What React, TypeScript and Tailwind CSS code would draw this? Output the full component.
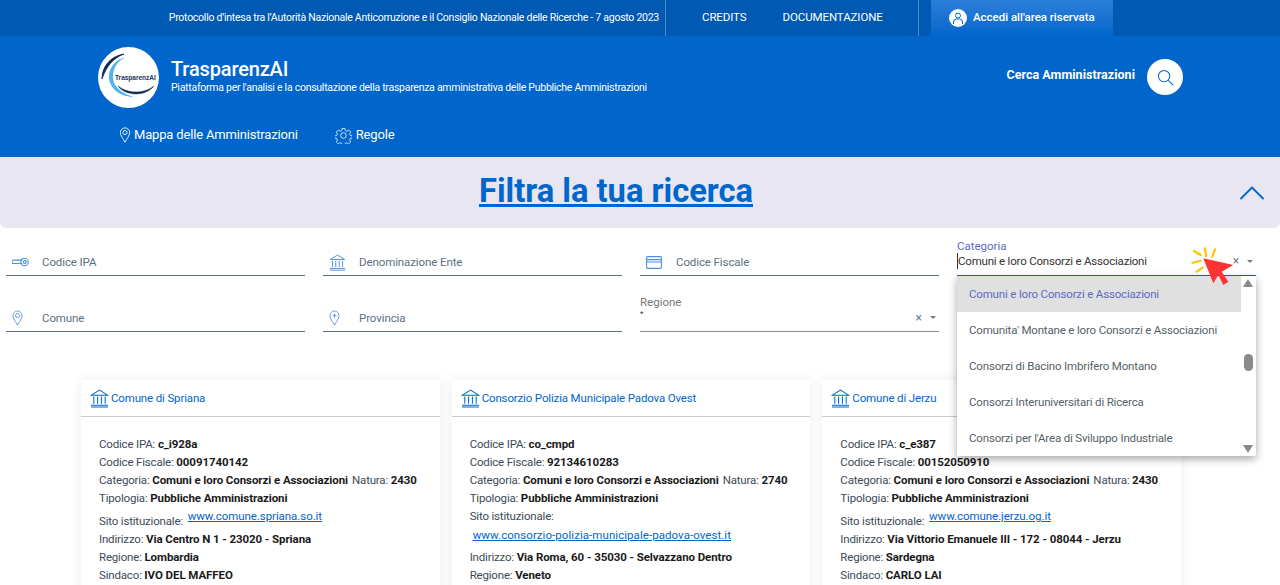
import React from 'react';
import { ChevronUp } from 'lucide-react';

const font = 'font-["Roboto",sans-serif]';

const Pin = ({ className = '', plus = false }: { className?: string; plus?: boolean }) => (
  <svg viewBox="0 0 14 20" fill="none" stroke="currentColor" strokeWidth="1.1" className={className}>
    <path d="M7 19 C5 15 1.2 11 1.2 6.9 a5.8 5.8 0 0 1 11.6 0 C12.8 11 9 15 7 19 Z" />
    {plus ? <path d="M7 4.5 v5 M4.5 7 h5" /> : <circle cx="7" cy="6.9" r="2.6" />}
  </svg>
);

const Bank = ({ className = '' }: { className?: string }) => (
  <svg viewBox="0 0 20 20" fill="none" stroke="currentColor" strokeWidth="1.1" className={className}>
    <path d="M1.5 6.5 L10 1.2 L18.5 6.5 Z" />
    <path d="M4 8 V15.5 M8 8 V15.5 M12 8 V15.5 M16 8 V15.5" />
    <path d="M1 17 H19 M1 19 H19" />
  </svg>
);

const Key = ({ className = '' }: { className?: string }) => (
  <svg viewBox="0 0 18 10" fill="none" stroke="currentColor" strokeWidth="1.2" className={className}>
    <path d="M11 3 H1.5 a1 1 0 0 0 0 3.6 H11" />
    <circle cx="13.2" cy="5" r="4" />
    <circle cx="13.6" cy="5" r="1.5" />
  </svg>
);

const CardIcon = ({ className = '' }: { className?: string }) => (
  <svg viewBox="0 0 16 13" fill="none" stroke="currentColor" strokeWidth="1.1" className={className}>
    <rect x="0.6" y="0.6" width="14.8" height="11.8" rx="1.2" />
    <path d="M0.6 3.6 H15.4 M0.6 6 H15.4" />
  </svg>
);

const Gear = ({ className = '' }: { className?: string }) => (
  <svg viewBox="0 0 24 24" fill="none" stroke="currentColor" strokeWidth="1.1" className={className}>
    <circle cx="12" cy="12" r="4" />
    <path d="M10 2 h4 l.6 3 2.2 1 2.6-1.6 2.8 2.8-1.6 2.6 1 2.2 3 .6 v3 l-3 .6-1 2.2 1.6 2.6-2.8 2.8-2.6-1.6-2.2 1-.6 3 h-4 l-.6-3-2.2-1-2.6 1.6-2.8-2.8 1.6-2.6-1-2.2-3-.6 v-3 l3-.6 1-2.2-1.6-2.6 2.8-2.8 2.6 1.6 2.2-1 z" />
  </svg>
);

const Search = ({ className = '' }: { className?: string }) => (
  <svg viewBox="0 0 18 18" fill="none" stroke="currentColor" strokeWidth="1.1" className={className}>
    <circle cx="7.5" cy="7.5" r="6" />
    <path d="M12 12 L17 17" />
  </svg>
);

const Logo = () => (
  <div className="relative w-[61px] h-[61px] rounded-full bg-white shrink-0">
    <svg viewBox="0 0 61 61" fill="none" className="absolute inset-0">
      <path d="M26 7 C13 9 4 19 4 32 C8 20 15 11 26 7 Z" fill="#0f2a52" stroke="#0f2a52" strokeWidth="0.8" />
      <path d="M28 10.5 C18 12 11 20 11 30 C11 41 22 50 36 50 C26 47 15 41 15 30 C15 21 20 13 28 10.5 Z" fill="#4fb4f0" />
      <path d="M20 39 C26 48 46 51 56 39 C46 47 30 47 20 39 Z" fill="#0f2a52" stroke="#0f2a52" strokeWidth="0.5" />
    </svg>
    <span className="absolute left-[17px] top-[27px] text-[6.5px] leading-[8px] font-bold text-[#17325c] font-['Liberation_Sans',sans-serif]">
      TrasparenzAI
    </span>
  </div>
);

const Field = ({ icon, label }: { icon: React.ReactNode; label: string }) => (
  <div className="h-[48px] flex items-center border-b border-[#5c6f82] text-[#5c6f82] pt-[24px] pb-[3px]">
    <span className="w-[36px] pl-[6px] text-[#4a90e2] flex items-center">{icon}</span>
    <span className="text-[11.5px] leading-[16px] tracking-[-0.1px]">{label}</span>
  </div>
);

const SelectArrows = () => (
  <span className="flex items-center gap-[8px] text-[#6b7c8c]">
    <span className="text-[12px] leading-none">×</span>
    <span className="w-0 h-0 border-x-[3.5px] border-x-transparent border-t-[3.5px] border-t-current" />
  </span>
);

const options = [
  'Comuni e loro Consorzi e Associazioni',
  "Comunita' Montane e loro Consorzi e Associazioni",
  'Consorzi di Bacino Imbrifero Montano',
  'Consorzi Interuniversitari di Ricerca',
  "Consorzi per l'Area di Sviluppo Industriale",
];

const Dropdown = () => (
  <div className="absolute left-0 right-0 top-[48px] h-[180px] bg-white shadow-[0_3px_8px_rgba(0,0,0,0.35)] flex z-10">
    <div className="flex-1">
      {options.map((o, i) => (
        <div
          key={o}
          className={`h-[36px] leading-[36px] pl-[12px] text-[11.5px] tracking-[-0.17px] ${i === 0 ? 'bg-[#e0e0e0] text-[#5c6bc0]' : 'text-[#555f69]'}`}
        >
          {o}
        </div>
      ))}
    </div>
    <div className="w-[15px] relative bg-white">
      <span className="absolute left-[2px] top-[3px] w-0 h-0 border-x-[5px] border-x-transparent border-b-[8px] border-b-[#8a8a8a]" />
      <span className="absolute left-[3px] top-[78px] w-[9px] h-[17px] rounded-full bg-[#8a8a8a]" />
      <span className="absolute left-[2px] bottom-[3px] w-0 h-0 border-x-[5px] border-x-transparent border-t-[8px] border-t-[#8a8a8a]" />
    </div>
  </div>
);

const Cursor = () => (
  <svg viewBox="0 0 44 44" className="absolute left-[234px] top-[16px] w-[44px] h-[44px] z-20">
    <path d="M12.3 14.3 L42.3 21 L30.7 27.7 L37.3 37.7 L32.3 41 L27.3 31 L22.3 39.3 Z" fill="#ff3333" />
    <path d="M3 7 L9.7 11 M14 4.3 L15 12 M24 5.3 L21.3 12.7 M1.7 18.7 L9.7 16.7 M5.7 27.7 L11.7 23.7" stroke="#ffc400" strokeWidth="2.2" strokeLinecap="round" />
  </svg>
);

const Label = ({ k, v }: { k: string; v: string }) => (
  <>
    {k}: <b className="font-bold text-[#1a1a1a] tracking-[-0.08px]">{v}</b>
  </>
);

type CardData = {
  title: string;
  ipa: string;
  cf: string;
  natura: string;
  link: string;
  linkBelow?: boolean;
  indirizzo: string;
  regione: string;
  sindaco?: string;
};

const cards: CardData[] = [
  { title: 'Comune di Spriana', ipa: 'c_i928a', cf: '00091740142', natura: '2430', link: 'www.comune.spriana.so.it', indirizzo: 'Via Centro N 1 - 23020 - Spriana', regione: 'Lombardia', sindaco: 'IVO DEL MAFFEO' },
  { title: 'Consorzio Polizia Municipale Padova Ovest', ipa: 'co_cmpd', cf: '92134610283', natura: '2740', link: 'www.consorzio-polizia-municipale-padova-ovest.it', linkBelow: true, indirizzo: 'Via Roma, 60 - 35030 - Selvazzano Dentro', regione: 'Veneto' },
  { title: 'Comune di Jerzu', ipa: 'c_e387', cf: '00152050910', natura: '2430', link: 'www.comune.jerzu.og.it', indirizzo: 'Via Vittorio Emanuele III - 172 - 08044 - Jerzu', regione: 'Sardegna', sindaco: 'CARLO LAI' },
];

const Card = ({ c }: { c: CardData }) => (
  <div className="bg-white shadow-[0_0_12px_rgba(0,0,0,0.08)] h-[240px]">
    <div className="h-[37px] border-b border-[#cccccc] flex items-center pl-[9px] gap-[2px] text-[#0066cc]">
      <Bank className="w-[19px] h-[19px]" />
      <span className="text-[11.5px] tracking-[-0.15px] pt-[2px]">{c.title}</span>
    </div>
    <div className="pl-[18px] pt-[18px] text-[11.5px] leading-[18px] tracking-[-0.18px] text-[#3d4a57] whitespace-nowrap">
      <div><Label k="Codice IPA" v={c.ipa} /></div>
      <div><Label k="Codice Fiscale" v={c.cf} /></div>
      <div>
        <Label k="Categoria" v="Comuni e loro Consorzi e Associazioni" />
        <span className="ml-[4px]"><Label k="Natura" v={c.natura} /></span>
      </div>
      <div><Label k="Tipologia" v="Pubbliche Amministrazioni" /></div>
      {c.linkBelow ? (
        <>
          <div>Sito istituzionale:</div>
          <div className="pl-[3px] text-[#0066cc] underline mt-[1px] mb-[4px] tracking-[0.06px]">{c.link}</div>
        </>
      ) : (
        <div className="h-[23px] leading-[28px]">
          Sito istituzionale: <a className="text-[#0066cc] underline relative -top-[5px] ml-[2px] tracking-[-0.06px]">{c.link}</a>
        </div>
      )}
      <div><Label k="Indirizzo" v={c.indirizzo} /></div>
      <div><Label k="Regione" v={c.regione} /></div>
      {c.sindaco && <div><Label k="Sindaco" v={c.sindaco} /></div>}
    </div>
  </div>
);

export default function App() {
  return (
    <div className={`${font} w-[1280px] h-[585px] overflow-hidden bg-white`}>
      {/* barra superiore */}
      <div className="h-[36px] bg-[#0059b3] flex text-white text-[11.5px]">
        <div className="w-[666px] border-r border-[#4d8bc9] flex items-center justify-end pr-[6px] text-[10.5px] tracking-[-0.26px]">
          Protocollo d’intesa tra l’Autorità Nazionale Anticorruzione e il Consiglio Nazionale delle Ricerche - 7 agosto 2023
        </div>
        <div className="w-[253px] border-r border-[#4d8bc9] flex items-center pl-[36px] gap-[36px] tracking-[-0.1px]">
          <span>CREDITS</span>
          <span>DOCUMENTAZIONE</span>
        </div>
        <div className="ml-[12px] w-[182px] bg-gradient-to-b from-[#2b7fd8] to-[#0066cc] flex items-center pl-[18px] gap-[6px] font-medium tracking-[-0.02px]">
          <span className="w-[18px] h-[18px] rounded-full bg-white text-[#0066cc] flex items-center justify-center">
            <svg viewBox="0 0 14 14" fill="none" stroke="currentColor" strokeWidth="1" className="w-[14px] h-[14px]">
              <circle cx="7" cy="4.5" r="2.5" />
              <path d="M2.5 13 V11 a3 3 0 0 1 3-3 h3 a3 3 0 0 1 3 3 v2" />
            </svg>
          </span>
          <span>Accedi all'area riservata</span>
        </div>
      </div>

      {/* testata */}
      <div className="h-[121px] bg-[#0066cc] text-white">
        <div className="flex pl-[98px] pr-[97px] pt-[11px]">
          <Logo />
          <div className="ml-[12px] pt-[9px]">
            <div className="text-[20px] leading-[26px] font-medium tracking-[-0.15px]">TrasparenzAI</div>
            <div className="text-[10.5px] leading-[12px] tracking-[-0.265px]">
              Piattaforma per l'analisi e la consultazione della trasparenza amministrativa delle Pubbliche Amministrazioni
            </div>
          </div>
          <div className="ml-auto flex items-center h-[36px] mt-[12px] gap-[12px]">
            <span className="text-[12.5px] font-bold pb-[4px] tracking-[0.03px]">Cerca Amministrazioni</span>
            <span className="w-[36px] h-[36px] rounded-full bg-white text-[#0066cc] flex items-center justify-center">
              <Search className="w-[17px] h-[17px]" />
            </span>
          </div>
        </div>
        <div className="flex pl-[119px] mt-[17px] text-[13px] tracking-[-0.17px] leading-[20px] items-center">
          <Pin className="w-[12px] h-[16px]" />
          <span className="ml-[3px]">Mappa delle Amministrazioni</span>
          <Gear className="w-[17px] h-[17px] ml-[37px]" />
          <span className="ml-[4px]">Regole</span>
        </div>
      </div>

      {/* filtro */}
      <div className="relative h-[71px] bg-[#e8e6f1] rounded-b-[6px] flex items-center justify-center pr-[48px] pb-[1px]">
        <h1 className="text-[32.7px] font-bold text-[#0066cc] underline">Filtra la tua ricerca</h1>
        <ChevronUp className="absolute right-[6px] top-[14px] w-[44px] h-[44px] text-[#0066cc]" strokeWidth={1} />
      </div>

      <div className="grid grid-cols-4 gap-x-[18px] px-[6px] pr-[24px]">
        <Field icon={<Key className="w-[17px] h-[10px]" />} label="Codice IPA" />
        <Field icon={<Bank className="w-[17px] h-[17px]" />} label="Denominazione Ente" />
        <Field icon={<CardIcon className="w-[16px] h-[13px]" />} label="Codice Fiscale" />
        <div className="relative h-[48px] border-b border-[#3f51b5]">
          <div className="pt-[12px] text-[11.5px] leading-[13px] text-[#5c6bc0]">Categoria</div>
          <div className="flex items-center justify-between pr-[3px] text-[11.5px] leading-[16px] tracking-[-0.2px] text-[#333]">
            <span className="border-l border-[#333]">Comuni e loro Consorzi e Associazioni</span>
            <SelectArrows />
          </div>
          <Dropdown />
          <Cursor />
        </div>
        <div className="mt-[8px]"><Field icon={<Pin className="w-[11px] h-[16px]" />} label="Comune" /></div>
        <div className="mt-[8px]"><Field icon={<Pin plus className="w-[11px] h-[16px]" />} label="Provincia" /></div>
        <div className="mt-[8px] h-[48px] border-b border-[#8a8a8a]">
          <div className="pt-[12px] text-[11.5px] leading-[13px] text-[#777]">Regione</div>
          <div className="flex items-center justify-between pr-[3px] pt-[2px] text-[8px] leading-[13px] text-[#333]">
            <span className="relative -top-[4px]">*</span>
            <SelectArrows />
          </div>
        </div>
      </div>

      {/* schede */}
      <div className="grid grid-cols-3 gap-x-[12px] pl-[81px] pr-[99px] mt-[48px]">
        {cards.map(c => <Card key={c.title} c={c} />)}
      </div>
    </div>
  );
}
